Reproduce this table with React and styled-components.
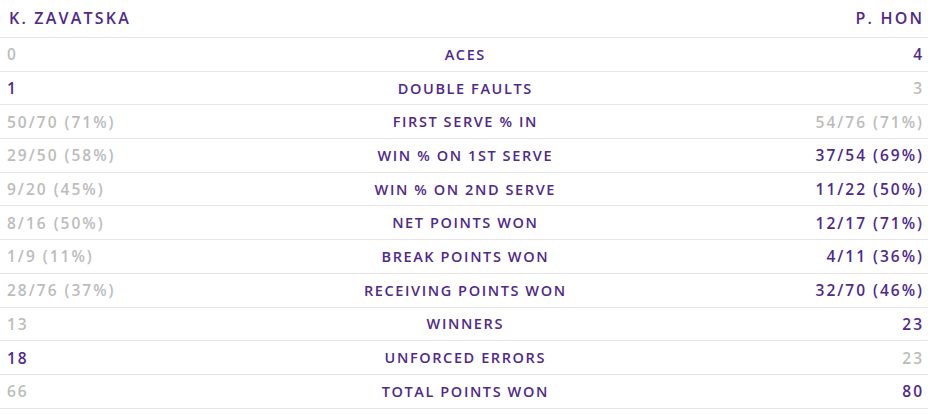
import React from "react";
import styled, { createGlobalStyle } from "styled-components";

const Global = createGlobalStyle`
  html, body { margin: 0; padding: 0; background: #fff; }
  body { font-family: "Open Sans", "Noto Sans", sans-serif; }
`;

const PURPLE = "#4f2a87";
const GRAY = "#bcbcbc";

const Table = styled.div`
  width: 928px;
  display: flex;
  flex-direction: column;
`;

const Header = styled.div`
  display: flex;
  justify-content: space-between;
  align-items: center;
  padding: 0 6px 2px 9px;
  border-bottom: 1px solid #e6e6e6;
  box-sizing: border-box;
  height: 38px;
`;

const Player = styled.span`
  font-size: 16px;
  font-weight: 600;
  color: ${PURPLE};
  letter-spacing: 2.2px;
  &:last-child { margin-right: -2.2px; }
`;

const Row = styled.div`
  display: grid;
  grid-template-columns: 1fr auto 1fr;
  align-items: center;
  height: 33.7px;
  padding: 0 6px 0 7px;
  border-bottom: 1px solid #e6e6e6;
  box-sizing: border-box;
`;

const Value = styled.span`
  font-size: 15.5px;
  font-weight: 600;
  letter-spacing: 2px;
  color: ${(p) => (p.$lead ? PURPLE : GRAY)};
  text-align: ${(p) => (p.$right ? "right" : "left")};
  margin-right: ${(p) => (p.$right ? "-2px" : "0")};
`;

const Label = styled.span`
  font-size: 14.5px;
  font-weight: 600;
  letter-spacing: 1.6px;
  color: ${PURPLE};
  text-align: center;
  padding-left: 1.6px;
`;

const stats = [
  ["ACES", "0", false, "4", true],
  ["DOUBLE FAULTS", "1", true, "3", false],
  ["FIRST SERVE % IN", "50/70 (71%)", false, "54/76 (71%)", false],
  ["WIN % ON 1ST SERVE", "29/50 (58%)", false, "37/54 (69%)", true],
  ["WIN % ON 2ND SERVE", "9/20 (45%)", false, "11/22 (50%)", true],
  ["NET POINTS WON", "8/16 (50%)", false, "12/17 (71%)", true],
  ["BREAK POINTS WON", "1/9 (11%)", false, "4/11 (36%)", true],
  ["RECEIVING POINTS WON", "28/76 (37%)", false, "32/70 (46%)", true],
  ["WINNERS", "13", false, "23", true],
  ["UNFORCED ERRORS", "18", true, "23", false],
  ["TOTAL POINTS WON", "66", false, "80", true],
];

export default function App() {
  return (
    <>
      <Global />
      <Table>
        <Header>
          <Player>K. ZAVATSKA</Player>
          <Player>P. HON</Player>
        </Header>
        {stats.map(([label, l, ll, r, rl]) => (
          <Row key={label}>
            <Value $lead={ll}>{l}</Value>
            <Label>{label}</Label>
            <Value $lead={rl} $right>{r}</Value>
          </Row>
        ))}
      </Table>
    </>
  );
}
